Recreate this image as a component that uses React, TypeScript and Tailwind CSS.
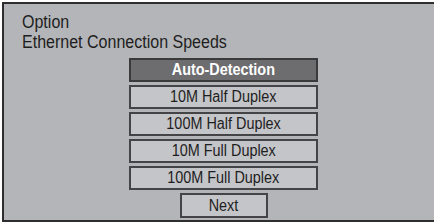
const options = [
  "Auto-Detection",
  "10M Half Duplex",
  "100M Half Duplex",
  "10M Full Duplex",
  "100M Full Duplex",
];

export default function App() {
  const selected = 0;
  return (
    <div
      className="w-[434px] h-[223px] bg-white pt-[2px] pl-[2px] overflow-hidden"
      style={{ fontFamily: '"Liberation Sans", Arial, sans-serif' }}
    >
      <div className="h-[220px] bg-[#b4b5b8] border-l-2 border-t-2 border-b-2 border-[#2e2e2e] pl-[18px] pt-[8px] flex flex-col text-[#1e1e1e]">
        <div className="text-[18px] leading-[20px] flex flex-col items-start">
          <span className="inline-block origin-left scale-x-[0.89] whitespace-nowrap">Option</span>
          <span className="inline-block origin-left scale-x-[0.89] whitespace-nowrap">Ethernet Connection Speeds</span>
        </div>
        <div className="mt-[6px] ml-[107px] w-[189px] flex flex-col gap-[3px]">
          {options.map((o, i) => (
            <div
              key={o}
              className={
                i === selected
                  ? "h-[24px] flex items-center justify-center border-2 border-[#3a3a3a] bg-[#6d6d6f] text-white font-bold text-[16px]"
                  : "h-[24px] flex items-center justify-center border-2 border-[#444446] bg-[#c4c5c8] text-[16px]"
              }
            >
              <span className="inline-block scale-x-90 whitespace-nowrap">{o}</span>
            </div>
          ))}
          <div className="self-center w-[88px] h-[25px] flex items-center justify-center border-2 border-[#444446] bg-[#c4c5c8] text-[16px]">
            <span className="inline-block scale-x-90">Next</span>
          </div>
        </div>
      </div>
    </div>
  );
}
